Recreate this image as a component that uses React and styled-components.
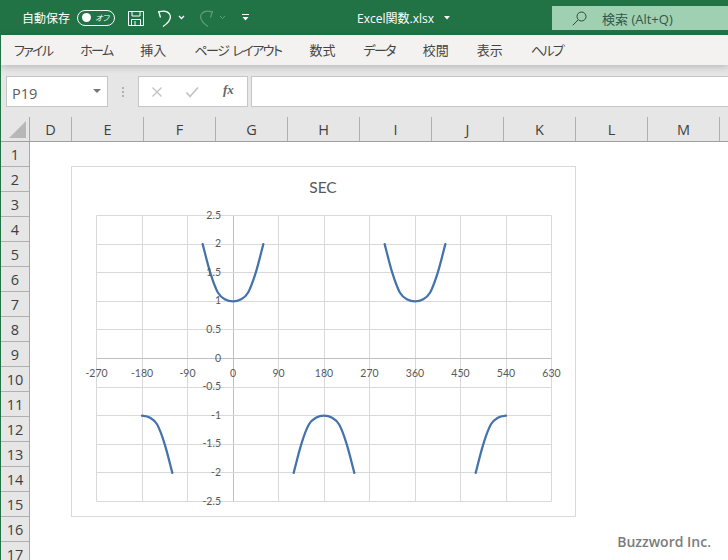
import React from 'react'
import styled, { createGlobalStyle } from 'styled-components'

const GlobalStyle = createGlobalStyle`
    html, body {
        margin: 0;
        padding: 0;
        background: #fff;
    }
    body {
        font-family: "Open Sans", "Noto Sans CJK JP", sans-serif;
    }
`

const Window = styled.div`
    width: 728px;
    height: 560px;
    overflow: hidden;
    box-sizing: border-box;
    border-left: 1px solid #217346;
    display: flex;
    flex-direction: column;
    background: #e6e6e6;
`

const TitleBar = styled.div`
    height: 35px;
    flex: none;
    margin-left: -1px;
    background: #217346;
    color: #fff;
    display: flex;
    align-items: center;
    font-size: 12px;
`
const AutoSave = styled.span`
    margin-left: 22px;
    font-family: "Noto Sans CJK JP", sans-serif;
    font-size: 12px;
`
const Toggle = styled.div`
    width: 38px;
    height: 16px;
    box-sizing: border-box;
    margin-left: 7px;
    border: 1px solid #fff;
    border-radius: 8px;
    display: flex;
    align-items: center;
    padding-left: 4px;
    gap: 4px;
`
const ToggleDot = styled.span`
    width: 9px;
    height: 9px;
    border-radius: 50%;
    background: #fff;
`
const ToggleText = styled.span`
    font-family: "Noto Sans CJK JP", sans-serif;
    font-size: 8px;
    font-style: italic;
    font-feature-settings: "palt";
    line-height: 1;
`
const QatIcon = styled.svg`
    display: block;
    flex: none;
    margin-left: ${p => p.$left}px;
`
const FileName = styled.div`
    margin-left: 108px;
    width: 80px;
    font-family: "Open Sans", "Noto Sans CJK JP", sans-serif;
    font-size: 12px;
    white-space: nowrap;
`
const Search = styled.div`
    margin-left: auto;
    width: 176px;
    height: 24px;
    margin-top: 1px;
    flex: none;
    background: #9fd0b1;
    color: #34574a;
    display: flex;
    align-items: center;
    font-family: "Open Sans", "Noto Sans CJK JP", sans-serif;
    font-size: 13px;
    white-space: nowrap;
`
const SearchIcon = styled.svg`
    margin-left: 20px;
    margin-right: 15px;
    flex: none;
`

const Ribbon = styled.div`
    height: 30px;
    flex: none;
    background: #f3f2f1;
    display: flex;
    align-items: center;
    gap: 28px;
    padding-left: 13px;
    box-shadow: 0 2px 7px rgba(0, 0, 0, 0.2);
    position: relative;
`
const Tab = styled.span`
    font-family: "Noto Sans CJK JP", sans-serif;
    font-size: 13px;
    font-feature-settings: "palt";
    letter-spacing: ${p => p.$spacing || 0}px;
    word-spacing: 2.5px;
    color: #444;
    white-space: nowrap;
    margin-top: -1px;
`

const FormulaRow = styled.div`
    height: 31px;
    flex: none;
    margin-top: 11px;
    padding-left: 5px;
    display: flex;
`
const Box = styled.div`
    box-sizing: border-box;
    height: 31px;
    background: #fff;
    border: 1px solid #c6c6c6;
    flex: none;
    display: flex;
    align-items: center;
`
const NameBox = styled(Box)`
    width: 102px;
    padding: 3px 6px 0 5px;
    justify-content: space-between;
    font-size: 14.5px;
    color: #5a5a5a;
`
const Caret = styled.span`
    width: 0;
    height: 0;
    border-left: 4px solid transparent;
    border-right: 4px solid transparent;
    border-top: 4px solid #777;
    margin-top: -5px;
`
const Dots = styled.div`
    width: 30px;
    flex: none;
    display: flex;
    flex-direction: column;
    align-items: center;
    justify-content: center;
    gap: 2px;
`
const Dot = styled.span`
    width: 2px;
    height: 2px;
    background: #b0b0b0;
`
const FuncBox = styled(Box)`
    width: 110px;
    padding-left: 12px;
    gap: 20px;
`
const Fx = styled.span`
    font-family: "Liberation Serif", serif;
    font-style: italic;
    font-weight: bold;
    font-size: 13px;
    color: #666;
    margin-left: 4px;
    margin-top: -3px;
`
const FormulaInput = styled(Box)`
    flex: 1;
    margin-left: 3px;
    border-right: none;
`

const ColHeader = styled.div`
    display: grid;
    grid-template-columns: 29px 42px repeat(10, 72px);
    height: 25px;
    flex: none;
    margin-top: 10px;
    box-sizing: border-box;
    border-bottom: 1px solid #9f9f9f;
`
const Corner = styled.div`
    border-right: 1px solid #a8a8a8;
    position: relative;
    &::after {
        content: "";
        position: absolute;
        right: 3px;
        bottom: 3px;
        width: 0;
        height: 0;
        border-left: 17px solid transparent;
        border-bottom: 17px solid #b7b7b7;
    }
`
const ColCell = styled.div`
    box-sizing: border-box;
    border-right: 1px solid #b0b0b0;
    display: flex;
    align-items: center;
    justify-content: center;
    font-size: 14.5px;
    color: #3f3f3f;
    padding-top: 1px;
`

const SheetBody = styled.div`
    flex: 1;
    display: flex;
    min-height: 0;
`
const RowHeader = styled.div`
    width: 29px;
    flex: none;
    box-sizing: border-box;
    border-right: 1px solid #a8a8a8;
`
const RowCell = styled.div`
    height: 25px;
    box-sizing: border-box;
    border-bottom: 1px solid #b0b0b0;
    display: flex;
    align-items: center;
    justify-content: center;
    font-size: 14.5px;
    color: #3f3f3f;
`
const Canvas = styled.div`
    flex: 1;
    background: #fff;
    position: relative;
`
const ChartFrame = styled.svg`
    position: absolute;
    left: 41px;
    top: 24px;
    display: block;
`
const Watermark = styled.div`
    position: absolute;
    right: 17px;
    bottom: 9px;
    font-family: "Open Sans", sans-serif;
    font-weight: 600;
    font-size: 14px;
    color: #7c7c7c;
`

const tabs = [
    { label: 'ファイル', spacing: -1.7 },
    { label: 'ホーム', spacing: -1.7 },
    { label: '挿入' },
    { label: 'ページ レイアウト', spacing: -1.5 },
    { label: '数式' },
    { label: 'データ', spacing: -1.7 },
    { label: '校閲' },
    { label: '表示' },
    { label: 'ヘルプ', spacing: -1.7 },
]
const cols = ['D', 'E', 'F', 'G', 'H', 'I', 'J', 'K', 'L', 'M', '']
const rows = Array.from({ length: 17 }, (_, i) => i + 1)

// chart coordinates, origin is the top left of the chart frame
const xOf = deg => 162 + deg * (45.5 / 90)
const yOf = v => 192.5 - v * 57.2
const xTicks = [-270, -180, -90, 0, 90, 180, 270, 360, 450, 540, 630]
const yTicks = [2.5, 2, 1.5, 1, 0.5, 0, -0.5, -1, -1.5, -2, -2.5]

// excel's smoothed line reads a little off the true secant, so the values are taken from the picture
const shape = { 0: 1, 15: 1.03, 30: 1.155, 45: 1.5, 60: 2 }
function secLine(deg) {
    const m = ((deg % 360) + 360) % 360
    if (m <= 60) return shape[m]
    if (m >= 300) return shape[360 - m]
    return -shape[Math.abs(m - 180)]
}

function smoothPath(from, to) {
    const pts = []
    for (let d = from; d <= to; d += 15) {
        pts.push([xOf(d), yOf(secLine(d))])
    }
    let d = `M${pts[0][0]} ${pts[0][1]}`
    for (let i = 0; i < pts.length - 1; i++) {
        const p0 = pts[i - 1] || pts[i]
        const p1 = pts[i]
        const p2 = pts[i + 1]
        const p3 = pts[i + 2] || p2
        const t = 1 / 6
        d += ` C${p1[0] + (p2[0] - p0[0]) * t} ${p1[1] + (p2[1] - p0[1]) * t} ${p2[0] - (p3[0] - p1[0]) * t} ${p2[1] - (p3[1] - p1[1]) * t} ${p2[0]} ${p2[1]}`
    }
    return d
}

const curves = [[-180, -120], [-60, 60], [120, 240], [300, 420], [480, 540]]

function Chart() {
    const labelStyle = { fontFamily: 'Lato, sans-serif', fontSize: 10.5, fill: '#595959' }
    return (
        <ChartFrame width="505" height="351" viewBox="0 0 505 351">
            <rect x="0.5" y="0.5" width="504" height="350" fill="#fff" stroke="#d9d9d9" />
            <text x="252" y="27" textAnchor="middle" style={{ ...labelStyle, fontSize: 15.5 }}>SEC</text>
            {xTicks.map(t => {
                const x = Math.round(xOf(t) - 0.5) + 0.5
                return <line key={t} x1={x} x2={x} y1={yOf(2.5)} y2={yOf(-2.5)} stroke={t === 0 ? '#bfbfbf' : '#d9d9d9'} />
            })}
            {yTicks.map(t => {
                const y = Math.round(yOf(t) - 0.5) + 0.5
                return <line key={t} x1={xOf(-270)} x2={xOf(630)} y1={y} y2={y} stroke={t === 0 ? '#bfbfbf' : '#d9d9d9'} />
            })}
            {curves.map(([a, b]) => (
                <path key={a} d={smoothPath(a, b)} fill="none" stroke="#4472ab" strokeWidth="2.25" strokeLinecap="round" />
            ))}
            {yTicks.map(t => (
                <text key={t} x="150" y={yOf(t) + 3} textAnchor="end" style={labelStyle}>{t}</text>
            ))}
            {xTicks.map(t => (
                <text key={t} x={xOf(t)} y="211" textAnchor="middle" style={labelStyle}>{t}</text>
            ))}
        </ChartFrame>
    )
}

export default function App() {
    return (
        <Window>
            <GlobalStyle />
            <TitleBar>
                <AutoSave>自動保存</AutoSave>
                <Toggle>
                    <ToggleDot />
                    <ToggleText>オフ</ToggleText>
                </Toggle>
                <QatIcon $left={12} width="18" height="18" viewBox="0 0 18 18" fill="none" stroke="#fff">
                    <path d="M1.5 2.5h15v14h-15z" />
                    <path d="M5 2.500v4.500h8V2.500M4.500 16.500v-6h9v6M8 12v4.500" />
                </QatIcon>
                <QatIcon $left={11} width="18" height="18" viewBox="0 0 18 18" fill="none" stroke="#fff" strokeWidth="1.3">
                    <path d="M2.500 2L4.500 8.500" />
                    <path d="M2.500 3C7 1.500 11.500 2 13.500 5c2.500 4-1.500 9-6.500 12.500" />
                </QatIcon>
                <QatIcon $left={4} width="7" height="5" viewBox="0 0 7 5" fill="none" stroke="#fff" strokeWidth="1.3">
                    <path d="M1 1l2.500 2.500L6 1" />
                </QatIcon>
                <QatIcon $left={12} width="18" height="18" viewBox="0 0 18 18" fill="none" stroke="#5f9c7c" strokeWidth="1.2">
                    <path d="M15.500 2L13.500 8.500" />
                    <path d="M15.500 3C11 1.500 6.500 2 4.500 5c-2.500 4 1.500 9 6.500 12.500" />
                </QatIcon>
                <QatIcon $left={4} width="7" height="5" viewBox="0 0 7 5" fill="none" stroke="#5f9c7c">
                    <path d="M1 1l2.500 2.500L6 1" />
                </QatIcon>
                <QatIcon $left={16} width="7" height="7" viewBox="0 0 7 7" fill="#fff">
                    <path d="M0 0h7v1H0zM0.500 3h6L3.500 6.500z" />
                </QatIcon>
                <FileName>Excel関数.xlsx</FileName>
                <QatIcon $left={7} width="6" height="4" viewBox="0 0 6 4" fill="#fff">
                    <path d="M0 0h6L3 3.500z" />
                </QatIcon>
                <Search>
                    <SearchIcon width="15" height="15" viewBox="0 0 15 15" fill="none" stroke="#2b4a3a">
                        <circle cx="9.500" cy="5.500" r="4.500" />
                        <path d="M6.200 8.800L0.800 14.200" />
                    </SearchIcon>
                    検索 (Alt+Q)
                </Search>
            </TitleBar>
            <Ribbon>
                {tabs.map(t => <Tab key={t.label} $spacing={t.spacing}>{t.label}</Tab>)}
            </Ribbon>
            <FormulaRow>
                <NameBox>
                    P19
                    <Caret />
                </NameBox>
                <Dots>
                    <Dot />
                    <Dot />
                    <Dot />
                </Dots>
                <FuncBox>
                    <svg width="12" height="12" viewBox="0 0 12 12" fill="none" stroke="#c4c4c4" strokeWidth="1.4">
                        <path d="M1.500 1.500l9 9M10.500 1.500l-9 9" />
                    </svg>
                    <svg width="14" height="12" viewBox="0 0 14 12" fill="none" stroke="#c4c4c4" strokeWidth="1.8" style={{ marginLeft: 2 }}>
                        <path d="M1.500 6.500l3.500 4L13 1.500" />
                    </svg>
                    <Fx>fx</Fx>
                </FuncBox>
                <FormulaInput />
            </FormulaRow>
            <ColHeader>
                <Corner />
                {cols.map((c, i) => <ColCell key={i}>{c}</ColCell>)}
            </ColHeader>
            <SheetBody>
                <RowHeader>
                    {rows.map(r => <RowCell key={r}>{r}</RowCell>)}
                </RowHeader>
                <Canvas>
                    <Chart />
                    <Watermark>Buzzword Inc.</Watermark>
                </Canvas>
            </SheetBody>
        </Window>
    )
}
